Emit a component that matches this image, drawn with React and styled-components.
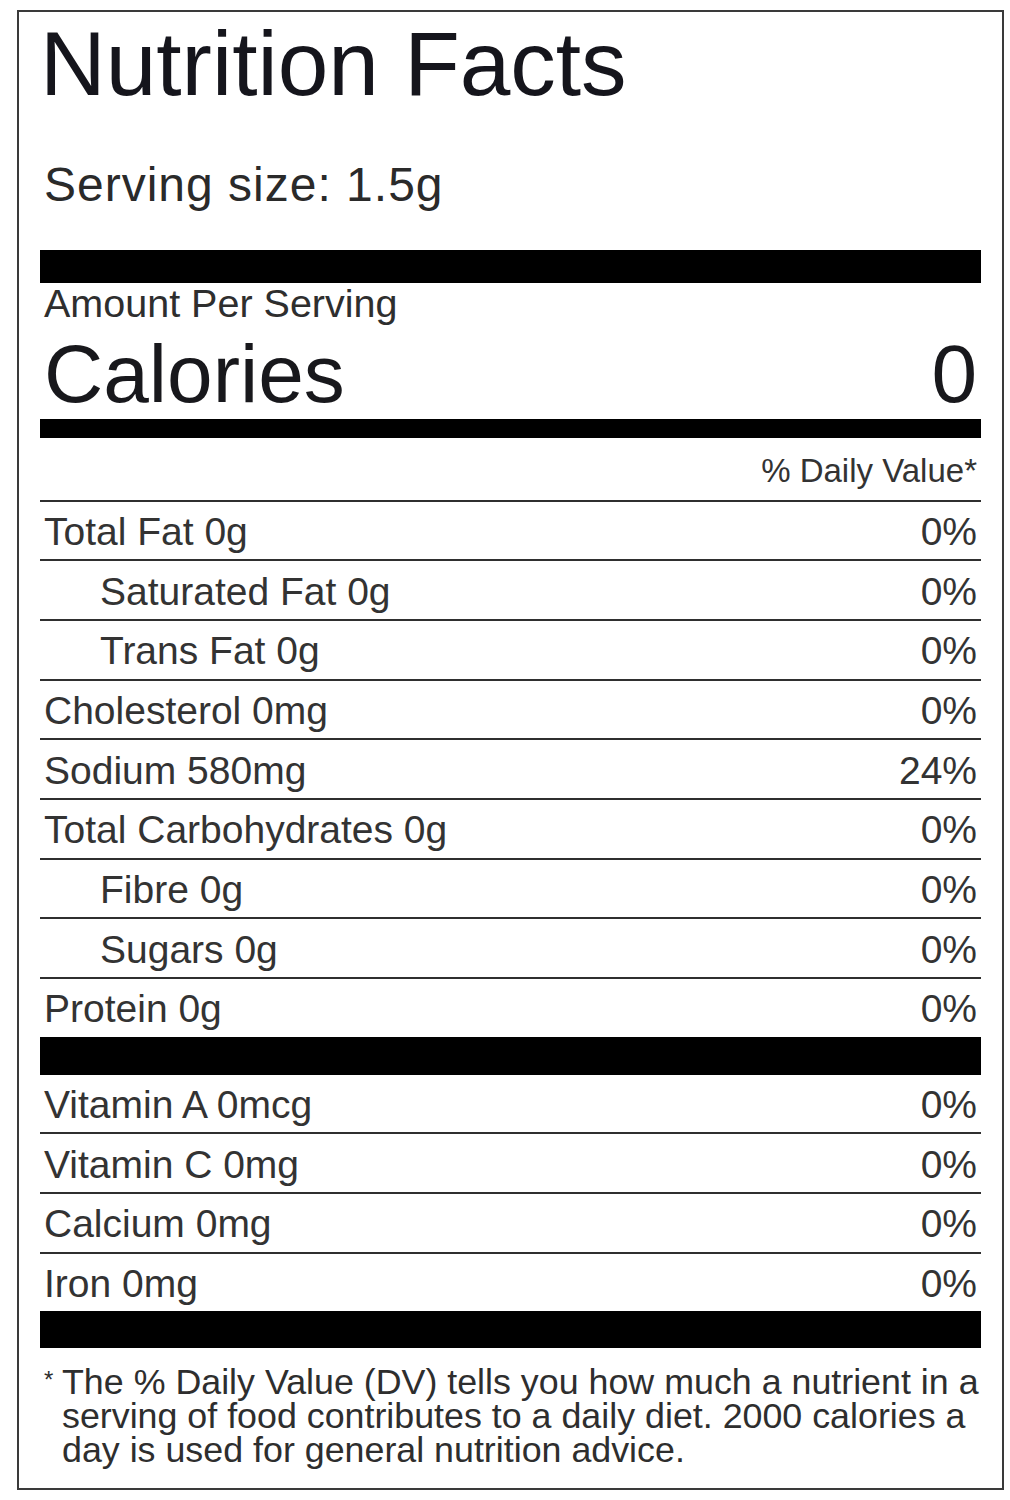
import React from 'react';
import styled, { createGlobalStyle } from 'styled-components';

const GlobalStyle = createGlobalStyle`
  html, body {
    margin: 0;
    padding: 0;
    background: #fff;
  }
  body {
    font-family: 'Liberation Sans', Arial, sans-serif;
    color: #2b2b2b;
  }
`;

const Label = styled.section`
  box-sizing: border-box;
  width: 987px;
  height: 1480px;
  margin: 10px 0 0 17px;
  padding: 0 21px;
  border: 2px solid #3a3a3a;
  display: flex;
  flex-direction: column;
`;

const Title = styled.h1`
  margin: 6px 0 0;
  font-size: 91px;
  font-weight: 400;
  line-height: 1;
  color: #15151c;
  white-space: nowrap;
`;

const ServingSize = styled.div`
  margin-top: 52px;
  padding-left: 4px;
  font-size: 48px;
  line-height: 1;
  letter-spacing: 1px;
  color: #2a2a2a;
`;

const Bar = styled.div`
  height: ${props => props.$height}px;
  margin-top: ${props => props.$gap || 0}px;
  background: #000;
  flex-shrink: 0;
`;

const AmountLabel = styled.div`
  margin-top: 1px;
  padding-left: 4px;
  font-size: 39.5px;
  line-height: 1;
  color: #2e2e2e;
`;

const CaloriesRow = styled.div`
  display: flex;
  justify-content: space-between;
  align-items: baseline;
  margin-top: 9px;
  padding: 0 4px;
  font-size: 82px;
  line-height: 1;
  color: #18181c;
`;

const DailyHeader = styled.div`
  margin-top: 16px;
  padding: 0 4px 13px;
  text-align: right;
  font-size: 33px;
  line-height: 1;
  color: #333;
`;

const Group = styled.div`
  display: flex;
  flex-direction: column;
`;

const Row = styled.div`
  box-sizing: border-box;
  display: flex;
  justify-content: space-between;
  align-items: center;
  height: ${props => (props.$ruled ? 59.7 : 57.7)}px;
  padding: 2px 4px 0 ${props => (props.$indent ? 60 : 4)}px;
  border-top: ${props => (props.$ruled ? '2px solid #2f2f2f' : 'none')};
  font-size: 39px;
  line-height: 1;
  color: #333;
  white-space: nowrap;
`;

const Footnote = styled.p`
  margin: 0;
  padding: 15px 0 0 22px;
  text-indent: -18px;
  font-size: 35.8px;
  line-height: 34px;
  color: #2e2e2e;
  white-space: nowrap;
`;

const Star = styled.span`
  display: inline-block;
  width: 18px;
  text-indent: 0;
  font-size: 24px;
  vertical-align: 6px;
`;

const nutrients = [
  { name: 'Total Fat 0g', dv: '0%' },
  { name: 'Saturated Fat 0g', dv: '0%', indent: true },
  { name: 'Trans Fat 0g', dv: '0%', indent: true },
  { name: 'Cholesterol 0mg', dv: '0%' },
  { name: 'Sodium 580mg', dv: '24%' },
  { name: 'Total Carbohydrates 0g', dv: '0%' },
  { name: 'Fibre 0g', dv: '0%', indent: true },
  { name: 'Sugars 0g', dv: '0%', indent: true },
  { name: 'Protein 0g', dv: '0%' },
];

const vitamins = [
  { name: 'Vitamin A 0mcg', dv: '0%' },
  { name: 'Vitamin C 0mg', dv: '0%' },
  { name: 'Calcium 0mg', dv: '0%' },
  { name: 'Iron 0mg', dv: '0%' },
];

export default function App() {
  return (
    <>
      <GlobalStyle />
      <Label>
        <Title>Nutrition Facts</Title>
        <ServingSize>Serving size: 1.5g</ServingSize>
        <Bar $height={33} $gap={41} />
        <AmountLabel>Amount Per Serving</AmountLabel>
        <CaloriesRow>
          <span>Calories</span>
          <span>0</span>
        </CaloriesRow>
        <Bar $height={19} $gap={4} />
        <DailyHeader>% Daily Value*</DailyHeader>

        <Group>
          {nutrients.map(item => (
            <Row key={item.name} $ruled $indent={item.indent}>
              <span>{item.name}</span>
              <span>{item.dv}</span>
            </Row>
          ))}
        </Group>

        <Bar $height={38} />

        <Group>
          {vitamins.map((item, i) => (
            <Row key={item.name} $ruled={i > 0}>
              <span>{item.name}</span>
              <span>{item.dv}</span>
            </Row>
          ))}
        </Group>

        <Bar $height={37} />

        <Footnote>
          <Star>*</Star>The % Daily Value (DV) tells you how much a nutrient in a
          <br />
          serving of food contributes to a daily diet. 2000 calories a
          <br />
          day is used for general nutrition advice.
        </Footnote>
      </Label>
    </>
  );
}
